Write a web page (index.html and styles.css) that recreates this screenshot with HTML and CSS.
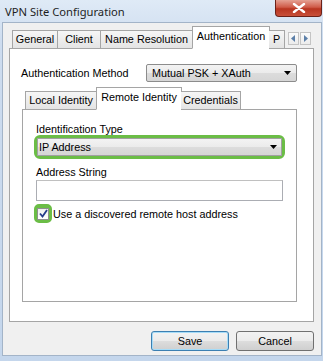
FILE: index.html
```html
<!DOCTYPE html>
<html lang="en">

<head>
    <meta charset="UTF-8">
    <meta name="viewport" content="width=device-width, initial-scale=1.0">
    <title>VPN Site Configuration</title>
    <link rel="stylesheet" href="styles.css">
</head>

<body>
    <div class="window">
        <div class="titlebar">
            <span class="title">VPN Site Configuration</span>
            <div class="close">
                <svg width="14" height="10" viewBox="0 0 14 10">
                    <path d="M2 1 L12 9 M12 1 L2 9" stroke="#fff" stroke-width="2.4" stroke-linecap="round" />
                </svg>
            </div>
        </div>

        <div class="client">
            <div class="tabs outer">
                <div class="strip">
                    <div class="tablist">
                        <div class="tab w-general">General</div>
                        <div class="tab w-client">Client</div>
                        <div class="tab w-names">Name Resolution</div>
                        <div class="tab active w-auth">Authentication</div>
                        <div class="tab w-p">P</div>
                    </div>
                    <div class="scroller">
                        <span class="arrow-btn"><svg width="5" height="7" viewBox="0 0 5 7"><path d="M4 0 L0 3.5 L4 7 Z" fill="#5c7fa8" /></svg></span>
                        <span class="arrow-btn"><svg width="5" height="7" viewBox="0 0 5 7"><path d="M1 0 L5 3.5 L1 7 Z" fill="#5c7fa8" /></svg></span>
                    </div>
                </div>
                <div class="panel outer-panel">
                    <div class="field-row">
                        <span class="field-label">Authentication Method</span>
                        <div class="select method">
                            <span>Mutual PSK + XAuth</span>
                            <svg width="7" height="4" viewBox="0 0 7 4"><path d="M0 0 H7 L3.5 4 Z" fill="#000" /></svg>
                        </div>
                    </div>

                    <div class="tabs inner">
                        <div class="strip">
                            <div class="tablist">
                                <div class="tab w-local">Local Identity</div>
                                <div class="tab active w-remote">Remote Identity</div>
                                <div class="tab w-cred">Credentials</div>
                            </div>
                        </div>
                        <div class="panel inner-panel">
                            <div class="caption">Identification Type</div>
                            <div class="highlight">
                                <div class="select idtype">
                                    <span>IP Address</span>
                                    <svg width="7" height="4" viewBox="0 0 7 4"><path d="M0 0 H7 L3.5 4 Z" fill="#000" /></svg>
                                </div>
                            </div>
                            <div class="caption second">Address String</div>
                            <div class="textbox"></div>
                            <div class="check-row">
                                <div class="highlight small">
                                    <span class="checkbox">
                                        <svg width="9" height="9" viewBox="0 0 9 9"><path d="M1 4.5 L3.5 7.5 L8 1" fill="none" stroke="#253c8a" stroke-width="1.8" /></svg>
                                    </span>
                                </div>
                                <span>Use a discovered remote host address</span>
                            </div>
                        </div>
                    </div>
                </div>
            </div>

            <div class="buttons">
                <button class="btn default">Save</button>
                <button class="btn">Cancel</button>
            </div>
        </div>
    </div>
</body>

</html>
```

FILE: styles.css
```css
body {
    margin: 0;
    width: 323px;
    height: 361px;
    overflow: hidden;
    font-family: 'Liberation Sans', Arial, sans-serif;
    font-size: 10.8px;
    color: #000;
    background: linear-gradient(180deg, #dfeaf6 0%, #cddcef 12%, #c4d6ec 100%);
}

.window {
    display: flex;
    flex-direction: column;
    height: 361px;
}

/* Title bar */
.titlebar {
    height: 22px;
    display: flex;
    justify-content: space-between;
    align-items: flex-start;
}

.title {
    font-family: 'Noto Sans', sans-serif;
    font-size: 11.2px;
    line-height: 23px;
    padding-left: 5px;
    color: #1e1e1e;
}

.close {
    width: 45px;
    height: 16px;
    margin-right: 1px;
    display: flex;
    justify-content: center;
    align-items: center;
    border: 1px solid #6b2118;
    border-top: none;
    border-radius: 0 0 4px 4px;
    background: linear-gradient(180deg, #e5a193 0%, #cf5b48 45%, #b83520 55%, #c8503a 100%);
}

/* Dialog client area */
.client {
    flex: 1;
    margin: 0 1px 5px 2px;
    padding: 3px 7px 4px 6px;
    display: flex;
    flex-direction: column;
    background: #f0f0f0;
    border: 1px solid #a3b4c8;
}

/* Tab controls */
.strip {
    display: flex;
    align-items: flex-end;
    height: 23px;
    margin-bottom: -1px;
    position: relative;
    z-index: 1;
}

.tablist {
    flex: 1;
    display: flex;
    align-items: flex-end;
    height: 100%;
    overflow: hidden;
}

.tab {
    flex: none;
    box-sizing: border-box;
    height: 19px;
    padding-top: 2px;
    text-align: center;
    white-space: nowrap;
    overflow: hidden;
    border: 1px solid #a5a5a5;
    border-left: none;
    background: linear-gradient(180deg, #f6f6f6, #e4e4e4);
}

.tab:first-child {
    border-left: 1px solid #a5a5a5;
}

.tab.active {
    height: 23px;
    padding-top: 3px;
    border-left: 1px solid #a5a5a5;
    border-bottom-color: #fff;
    background: #fff;
    margin-right: -1px;
}

.outer .tablist {
    padding-left: 3px;
}

.w-general { width: 46px; }
.w-client { width: 43px; }
.w-names { width: 92px; }
.w-auth { width: 78px; margin-left: -1px; }
.w-p { width: 16px; text-align: left; padding-left: 4px; }

.scroller {
    display: flex;
    gap: 1px;
    padding: 0 3px 4px 1px;
}

.arrow-btn {
    width: 11px;
    height: 13px;
    box-sizing: border-box;
    display: flex;
    align-items: center;
    justify-content: center;
    border: 1px solid #c4c4c4;
    background: linear-gradient(180deg, #fbfbfb, #ececec);
}

.panel {
    box-sizing: border-box;
    background: #fff;
    border: 1px solid #a5a5a5;
}

.outer-panel {
    height: 274px;
    padding: 15px 15px 0 11px;
}

.field-row {
    display: flex;
    align-items: center;
    height: 18px;
}

.field-label {
    width: 125px;
}

/* Drop-down boxes */
.select {
    box-sizing: border-box;
    height: 18px;
    display: flex;
    align-items: center;
    justify-content: space-between;
    padding: 0 5px 0 5px;
    border: 1px solid #8c8c8c;
    border-radius: 2px;
    background: linear-gradient(180deg, #f3f3f3 0%, #ebebeb 50%, #dcdcdc 51%, #d6d6d6 100%);
}

.method {
    width: 151px;
}

.inner {
    margin: 5px 1px 0 1px;
}

.inner-panel {
    height: 193px;
    padding: 12px 11px 0 11px;
}

.w-local { width: 72px; }
.w-remote { width: 86px; margin-left: -1px; }
.w-cred { width: 60px; }

.caption {
    line-height: 14px;
    padding-left: 2px;
}

.caption.second {
    margin-top: 6px;
}

/* Green callouts */
.highlight {
    box-sizing: border-box;
    height: 24px;
    margin-top: -1px;
    border: 3px solid #6bbd46;
    border-radius: 6px;
    background: #6bbd46;
}

.idtype {
    border-color: #a0a0a0;
    border-radius: 0;
    padding-left: 1px;
    padding-right: 4px;
}

.textbox {
    box-sizing: border-box;
    height: 21px;
    margin: 1px 2px 0 2px;
    border: 1px solid #abadb3;
    border-top-color: #c0c0c0;
    background: #fff;
}

.check-row {
    display: flex;
    align-items: center;
    gap: 1px;
    margin-top: 3px;
}

.highlight.small {
    width: 18px;
    height: 19px;
    margin-top: 0;
    border-radius: 5px;
    display: flex;
    align-items: center;
    justify-content: center;
}

.checkbox {
    box-sizing: border-box;
    width: 12px;
    height: 12px;
    display: flex;
    align-items: center;
    justify-content: center;
    border: 1px solid #8e8f8f;
    background: linear-gradient(180deg, #f0f0f0, #ffffff);
}

/* Dialog buttons */
.buttons {
    display: flex;
    justify-content: flex-end;
    gap: 7px;
    margin-top: 9px;
}

.btn {
    width: 78px;
    height: 20px;
    padding: 0;
    font-family: 'Liberation Sans', Arial, sans-serif;
    font-size: 10.8px;
    color: #000;
    border: 1px solid #707070;
    border-radius: 3px;
    background: linear-gradient(180deg, #f2f2f2 0%, #ebebeb 50%, #dddddd 51%, #cfcfcf 100%);
}

.btn.default {
    border-color: #3c7fb1;
    box-shadow: inset 0 0 0 1px #a6dcf8;
}
```
